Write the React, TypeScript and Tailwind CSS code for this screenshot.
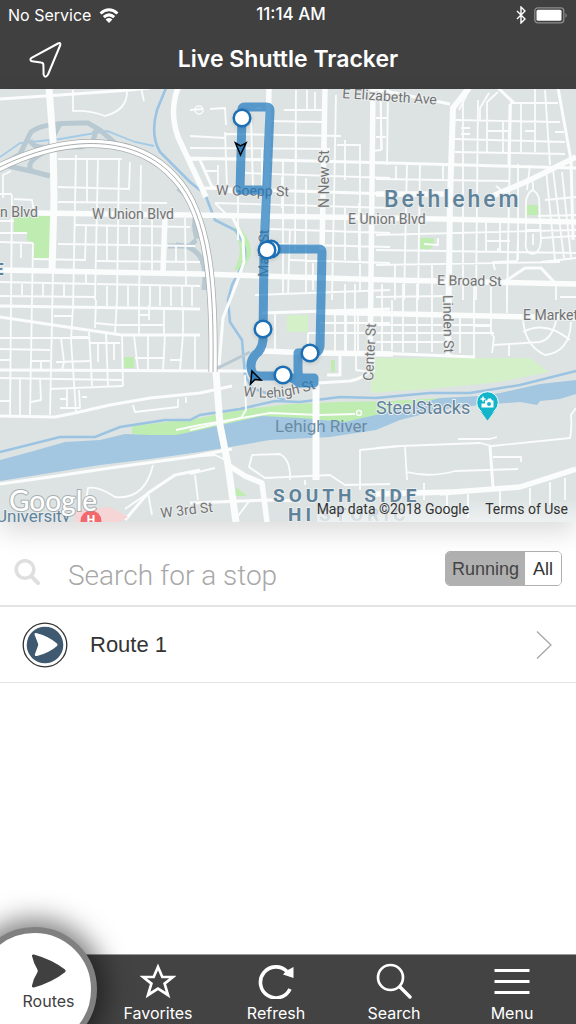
import React, { useState } from "react";

const minorRoads = [
  // north-west blocks
  "M58 159H122M58 187L130 189M58 202L167 203M75 225L190 227M0 242L33 243M58 244L195 246M0 221H14M0 233H27M34 259L85 260L86 226",
  "M76 155L73 307M87 160V202M98 160L95 300M119 160L117 300M130 162L129 189M141 165L139 300M12 195L10 415M33 243L30 415M21 244V258M107 226V260M152 220V245M152 246V270M129 227V245M185 218L186 285M176 246V262",
  "M3 198V175L11 171M0 194H12M14 199L32 200L34 212M73 90V111Q90 110 105 116Q128 110 127 90M141 88L144 101",
  "M0 282L95 284M0 296L95 297M97 284L200 286M95 261L200 262M22 284V295M43 284V296M64 284V296M86 272V285M107 286V306M128 286V306M150 286V306M160 286V306M171 286V306M182 286V306M192 286V306",
  // west side
  "M53 272L50 415M73 307L71 340L76 412M96 300L95 328M89 332L92 386M106 332L108 386M122 335L123 386M117 300L115 334M139 300V334M164 307V334M183 307V334M134 335L138 370M148 335V370M165 335L163 370M183 335L180 370M195 335V370",
  "M0 338H90M0 349L50 350M0 378L122 380M50 389L123 386M54 316H72M95 323L115 325L163 325M138 315H150M61 338L64 362L62 370M72 337H88M90 343H120M98 343V362M114 343V360M56 362L90 361M31 361H50M41 361V370M135 358H165M170 360H182M20 378V415M40 378L41 400L31 402M0 360H10M0 401H10M67 389V408M60 399H67M60 408H80L79 390M82 397H87M149 305V320",
  "M133 405L135 412L178 407V399M186 397V403",
  // centre blocks
  "M190 110L202 109M210 109L225 108L226 125M190 136L225 138L226 134L341 136M190 148L330 149M190 160L245 158M245 173L390 178M215 203L390 208M270 229L390 233M270 244L390 247M290 260L390 263M255 295L390 290M225 132L227 187M238 190V240M251 120L253 187M262 148V250M283 160V295M296 90L295 250M307 90V109M315 92V110M284 110L325 110M270 121L322 122M296 135V175M336 95L332 300M360 150V290M345 140V180M306 178V292M290 229L288 295M282 177V208M256 108H262M337 145H360V150M381 90V150L370 151M359 203V260M345 208V260M313 263V290",
  "M215 203L227 215L262 217M205 171H218V185M218 165V171",
  // north-east blocks
  "M388 88L387 165M376 118H387M407 165L404 300M420 165L418 300M396 166V180M443 166V180M376 137H386M380 88L382 150M376 179L510 181M463 100V300M478 100L476 300M511 100L507 300M455 120L560 122M455 139L565 142M455 152L565 154M461 128H470M461 134H470M487 120V152M503 120V152M487 131H510M521 103V152M535 88V152M545 90L550 165M555 132H564M511 103H558M525 131H535M489 93L480 108V120M470 88L459 110M498 92L487 102V120M376 235L576 230M376 250L576 253M376 265L560 262M486 220V252M500 220V252M486 241H510M498 248V252M530 165L527 190M546 170L555 260M553 170L564 258M562 172L571 258M545 200L576 197M538 216L576 215M541 262L576 258M541 238L576 236M496 186L505 193M518 164V260",
  "M526 240V200Q532 182 539 198L541 240Q540 254 532 254Q524 252 526 240M533 190V182M533 234V245M526 230H540M526 215V232M495 270L493 262L517 261L518 240M395 265V300M432 265V300M424 244L438 245V238",
  // east side
  "M382 284V352M403 284V352M417 284V352M376 325H492M376 333H494M376 342H450M376 297L448 296M474 284V356M491 284V333L494 337L492 353M507 284V313M556 285V300M576 297H560M474 326H491M460 315V353M432 300V352M494 345L540 342Q550 340 555 325M509 345V356M523 315Q523 345 545 355Q570 352 571 322M523 332Q545 320 570 340M555 325L558 313",
  "M335 310V352M346 310V352M358 310V352M320 323H390M320 333H390M308 333V350M275 313V350M308 333H318M374 355V372M356 355V370L370 372M355 284V352M345 284V352M392 300V350",
  // south side
  "M376 448L400 446L480 443L492 446L570 438Q572 430 571 415L576 408M405 447L407 480M407 472Q430 478 455 471L518 469M458 439H490L497 437M493 457H521V462M424 483V500M447 493V515M468 494V518M500 490V510M530 488V505M550 482V505M565 478V500",
  "M252 455L280 454Q291 460 290 480M252 455L249 467L265 478L330 475L345 485L390 484M360 490V450L400 446M195 475L198 500M215 468L190 474M305 480V485M190 457L215 455L230 462M245 375L246 410L241 418L190 430M235 520L250 500M153 465Q145 500 115 497Q98 486 88 488L86 500M148 493L152 515M125 509L148 493",
];

const midRoads = [
  "M0 99L60 95L130 90L150 88M0 306L200 309M0 317L60 326L122 335L200 335M0 370L235 371L250 371M0 416L55 417L75 413L110 405L150 398L200 393L232 386",
  "M0 484L50 477L110 468L190 457L232 449M200 470L175 475L148 493L125 520",
  "M190 158L390 163L576 168M200 188L390 194M262 313L390 309M200 160L212 187L232 192L265 194M232 216L243 238L244 262L236 285L223 318L219 365M190 503L270 500L300 501",
  "M376 353L475 357M558 88L571 160L573 240M490 446L493 487M318 383L350 381Q362 379 371 370M327 375H340V355M370 88L450 104",
  "M498 88L514 103M510 104L509 165M500 285L525 268H541L556 284",
];

const majorRoads = [
  "M0 270L200 274L390 280L576 284M35 213L190 215L390 218L576 222M165 218L163 272M178 88Q169 111 178 137L206 197",
  "M325 88L322 250M373 88L370 372M316 312L576 318M320 353L393 354M263 351L312 353M269 88L265 250",
  "M488 198L530 180L576 157M228 465L245 476L262 483L267 522M440 493L520 487L576 469",
  "M376 194H450M376 494L450 492",
];

type MapLabel = { x: number; y: number; text: string; rotate?: number };

const streets: MapLabel[] = [
  { x: 342, y: 98, text: "E Elizabeth Ave", rotate: 4 },
  { x: 216, y: 195, text: "W Goepp St", rotate: 1 },
  { x: 0, y: 217, text: "n Blvd" },
  { x: 92, y: 219, text: "W Union Blvd" },
  { x: 348, y: 224, text: "E Union Blvd" },
  { x: 437, y: 285, text: "E Broad St", rotate: 1 },
  { x: 523, y: 320, text: "E Market" },
  { x: 329, y: 208, text: "N New St", rotate: -90 },
  { x: 268, y: 277, text: "Main St", rotate: -89 },
  { x: 373, y: 381, text: "Center St", rotate: -87 },
  { x: 443, y: 295, text: "Linden St", rotate: 89 },
  { x: 161, y: 518, text: "W 3rd St", rotate: -7 },
];

const stops = [
  [242, 118],
  [271, 249],
  [267, 250],
  [263, 329],
  [310, 353],
  [283, 375],
];

function ShuttleMap() {
  return (
    <svg
      viewBox="0 89 576 433"
      preserveAspectRatio="xMidYMid slice"
      className="block h-[433px] w-full font-['Roboto',sans-serif]"
      role="img"
      aria-label="Shuttle map"
    >
      <rect y="89" width="576" height="433" fill="#dde3e3" />
      <g fill="#bfecb0">
        <path d="M14 216H50V258H34V243L27 240V232H14Z" />
        <rect x="124" y="357" width="10" height="11" />
        <rect x="527" y="205" width="11" height="10" />
        <path d="M420 238H434V244L430 249H420Z" />
        <path d="M237 226Q252 238 251 255L243 270H234Q246 248 233 230Z" />
        <path d="M132 426L175 421L200 418L240 410L290 404L340 402L390 401L440 398L400 420L320 428L200 440L132 434Z" />
        <path d="M236 487L247 496H235Z" />
        <rect x="331" y="360" width="4" height="12" />
      </g>
      <g fill="#d3f0c9">
        <rect x="287" y="315" width="21" height="17" />
        <path d="M371 358H530L549 372L500 382L430 389L371 393Z" />
      </g>
      <path
        d="M0 460L30 452L65 442L100 440L125 434L150 435L176 435L200 430L230 423L262 416L300 418L345 422L380 414L420 403L440 398L480 396L500 393L540 384L576 380V394L560 399L540 401L537 405L520 402L480 405L440 410L400 420L376 430L330 437L270 440L230 447L200 452L150 459L100 465L50 473L0 481Z"
        fill="#a3c7e0"
      />
      <path
        d="M0 452L60 437H95L120 427L165 420H190L200 415L240 409L275 401L300 402L340 397L376 398L430 393L470 393L520 385L576 371"
        fill="none"
        stroke="#9bc3e2"
        strokeWidth="2.5"
      />
      <path
        d="M166 88L157 110Q150 135 160 152L190 182L205 194L215 220L235 230Q250 248 243 264L232 285L228 300L230 322L242 340L245 375L252 388L285 400"
        fill="none"
        stroke="#9bc3e2"
        strokeWidth="2.6"
      />
      <path d="M0 157L20 143L60 139L107 131L135 142L154 146" fill="none" stroke="#a3cbe8" strokeWidth="1.8" />
      <g fill="none" stroke="#b9c9d1" strokeWidth="5">
        <path d="M0 167L20 154L31 132Q42 122 88 123L100 130L115 143L140 152" />
        <path d="M30 140Q33 149 50 147H80Q96 145 95 130M60 124Q55 132 50 145" />
        <path d="M8 166L35 172L50 176M32 172Q24 162 45 152" />
        <path d="M168 246H190L196 240M176 245Q210 246 204 290M197 239Q192 225 197 212M178 188Q200 205 205 240" />
        <path d="M216 369L250 352" strokeWidth="3" />
      </g>
      <g fill="none" stroke="#fbfcfc" strokeLinejoin="round">
        {minorRoads.map((d) => (
          <path key={d} d={d} strokeWidth="1.8" />
        ))}
        {midRoads.map((d) => (
          <path key={d} d={d} strokeWidth="3" />
        ))}
        {majorRoads.map((d) => (
          <path key={d} d={d} strokeWidth="5.5" />
        ))}
        <path d="M49 88L53 140L54 200L52 272" strokeWidth="7" />
        <path d="M469 88L453 108L450 200L448 356" strokeWidth="6" />
        <path d="M216 372L220 425L228 465L236 522M316 385V480" strokeWidth="7" />
        <path d="M176 430L200 425L230 420L270 413L320 415L355 414" strokeWidth="2" />
        <circle cx="359" cy="413" r="2.5" strokeWidth="1.5" />
        <circle cx="199" cy="110" r="4" strokeWidth="1.5" />
      </g>
      <g fill="none">
        <path d="M-2 168C70 132 138 136 175 178C210 215 214 290 213 372" stroke="#a9adae" strokeWidth="9" />
        <path d="M-2 168C70 132 138 136 175 178C210 215 214 290 213 372" stroke="#ffffff" strokeWidth="7.5" />
        <path d="M-2 168C70 132 138 136 175 178C210 215 214 290 213 372" stroke="#a9adae" strokeWidth="1" />
      </g>
      <path d="M75 510L110 507L128 517L118 523H75Z" fill="#f5d5d6" />

      <g fill="#737373" stroke="#e9eded" strokeWidth="2" paintOrder="stroke" fontSize="14">
        {streets.map((s) => (
          <text key={s.text} x={s.x} y={s.y} transform={`rotate(${s.rotate ?? 0} ${s.x} ${s.y})`}>
            {s.text}
          </text>
        ))}
        <path id="lehigh-st" d="M243 396Q285 402 322 386" fill="none" stroke="none" />
        <text>
          <textPath href="#lehigh-st">W Lehigh St</textPath>
        </text>
      </g>
      <text x="275" y="432" fontSize="17" fill="#6b8ba4">Lehigh River</text>
      <g fill="#5f829b" stroke="#e9eded" strokeWidth="2" paintOrder="stroke">
        <text x="384" y="207" fontSize="23" fontWeight="500" letterSpacing="3">Bethlehem</text>
        <text x="376" y="414" fontSize="18">SteelStacks</text>
        <text x="273" y="502" fontSize="19" fontWeight="700" letterSpacing="4">SOUTH SIDE</text>
        <text x="288" y="521" fontSize="19" fontWeight="700" letterSpacing="4">HI</text>
        <text x="319" y="521" fontSize="19" fontWeight="700" letterSpacing="4" opacity=".3">STORIC</text>
        <text x="-4" y="522" fontSize="17">University</text>
        <text x="-6" y="275" fontSize="17" fontWeight="700">E</text>
      </g>

      <path d="M479 409L487.500 420.500L496 409Z" fill="#12b5c9" />
      <circle cx="487.500" cy="402.500" r="10.800" fill="#12b5c9" stroke="#ffffff" strokeWidth="1" />
      <path d="M480 409L487.500 420L495 409Z" fill="#12b5c9" />
      <path d="M485 400.500h2l1-2h3l1 2h1.500v7h-12v-4h3.500Z" fill="#ffffff" />
      <circle cx="489" cy="404" r="2" fill="#12b5c9" />
      <path d="M483 396.500v5M480.500 399h5" stroke="#ffffff" strokeWidth="1.500" />
      <circle cx="91" cy="521" r="10.500" fill="#f2696d" />
      <text x="91" y="524" fontSize="12" fontWeight="700" textAnchor="middle" fill="#ffffff">H</text>

      <path
        d="M242 118V109Q242 107 245 107L267 107Q270 107 270 111L264 250L263 340Q262 350 255 355Q248 364 253 374Q256 376 261 376H283Q292 376 299 383H314V378H302Q298 377 298 370V353H313Q319 353 320 346L322 252Q322 249 319 249H268M242 118L240 190H265"
        fill="none"
        stroke="#1c77bd"
        strokeOpacity=".7"
        strokeWidth="9"
        strokeLinejoin="round"
      />
      <g fill="#2f80bd" stroke="#000000" strokeWidth="1.500" strokeLinejoin="miter">
        <path d="M235.500 143L240.500 146L246 143L240.500 155Z" />
        <path d="M252 371L261 380L255 379.500L250.500 384Z" />
      </g>
      <g fill="#ffffff" stroke="#1c6fb5" strokeWidth="2.500" className="drop-shadow-sm">
        {stops.map(([x, y]) => (
          <circle key={x} cx={x} cy={y} r="8.300" />
        ))}
      </g>
      <text
        x="9"
        y="511"
        fontSize="28"
        fontWeight="500"
        className="font-['Lato',sans-serif]"
        fill="#ffffff"
        stroke="#8f9899"
        strokeOpacity=".7"
        strokeWidth="2"
        paintOrder="stroke"
      >
        Google
      </text>
    </svg>
  );
}

function StatusBar() {
  return (
    <div className="grid h-[30px] grid-cols-3 items-center px-2 text-base">
      <div className="flex items-center gap-2">
        <span>No Service</span>
        <svg viewBox="0 0 20 15" className="h-[15px] w-5" aria-hidden="true">
          <g fill="none" stroke="white" strokeWidth="3">
            <path d="M1.500 5.500Q10-2 18.500 5.500" />
            <path d="M4.800 9.200Q10 4.600 15.200 9.200" />
          </g>
          <path d="M10 15L6.600 11.400Q10 8.600 13.400 11.400Z" fill="white" />
        </svg>
      </div>
      <span className="pl-1.5 text-center text-[17px] font-medium">11:14 AM</span>
      <div className="flex items-center justify-end gap-2">
        <svg viewBox="0 0 10 18" className="h-[18px] w-2.5" fill="none" stroke="white" strokeWidth="1.400" aria-hidden="true">
          <path d="M1 5L9 13L5 17V1L9 5L1 13" />
        </svg>
        <svg viewBox="0 0 34 17" className="h-[17px] w-[34px]" aria-hidden="true">
          <rect x=".8" y=".8" width="29" height="15" rx="3" fill="none" stroke="#8c8c8c" strokeWidth="1.300" />
          <rect x="2.500" y="2.800" width="25" height="11" rx="1.500" fill="white" />
          <path d="M31.500 6Q34 8.500 31.500 11Z" fill="#8c8c8c" />
        </svg>
      </div>
    </div>
  );
}

function Tab({ label, children }: { label: string; children: React.ReactNode }) {
  return (
    <button type="button" className="flex flex-1 flex-col items-center gap-1 pt-2">
      <svg viewBox="0 0 36 36" className="size-9" fill="none" stroke="white" strokeWidth="2.700" aria-hidden="true">
        {children}
      </svg>
      <span className="text-base leading-5">{label}</span>
    </button>
  );
}

export default function App() {
  const [filter, setFilter] = useState("Running");
  const [query, setQuery] = useState("");

  return (
    <div className="flex min-h-screen flex-col overflow-hidden bg-white font-['Inter',sans-serif]">
      <header className="bg-[#404040] text-white">
        <StatusBar />
        <div className="grid h-[59px] grid-cols-[80px_1fr_80px] items-center">
          <button type="button" aria-label="My location" className="pl-7">
            <svg viewBox="0 0 36 38" className="h-[38px] w-9" fill="none" stroke="white" strokeWidth="2" strokeLinejoin="round" aria-hidden="true">
              <path d="M30 2.500Q32.800 1 32.300 4L20 33.500Q17 38 15.600 33.500L15.400 24Q15.400 21.600 13 21.500L4 20.300Q1 19 3.500 16.800Z" />
            </svg>
          </button>
          <h1 className="text-center text-[23px] font-semibold">Live Shuttle Tracker</h1>
        </div>
      </header>

      <main className="flex-1">
        <section className="relative shadow-[0_10px_24px_rgba(0,0,0,0.14)]">
          <ShuttleMap />
          <div className="absolute right-0 bottom-0 flex h-6 items-center justify-end gap-4 bg-linear-to-b from-transparent to-white/50 pr-2 pb-0.5 font-['Roboto',sans-serif] text-sm text-[#333333]">
            <span>Map data ©2018 Google</span>
            <a href="#terms">Terms of Use</a>
          </div>
        </section>

        <form className="flex h-[85px] items-center border-b-2 border-[#e4e4e4] px-3.5 pt-6" onSubmit={(e) => e.preventDefault()}>
          <svg viewBox="0 0 26 26" className="-mt-2 mr-7 size-[26px]" fill="none" stroke="#dfdfdf" aria-hidden="true">
            <circle cx="11" cy="10.500" r="8.800" strokeWidth="3.600" />
            <path d="M17 17L24 24" strokeWidth="4" strokeLinecap="round" />
          </svg>
          <input
            type="text"
            aria-label="Search for a stop"
            placeholder="Search for a stop"
            value={query}
            onChange={(e) => setQuery(e.target.value)}
            className="min-w-0 flex-1 font-['Roboto',sans-serif] text-[28px] leading-9 font-light text-[#444444] outline-none placeholder:text-[#a8a8a8]"
          />
          <div className="-mt-3.5 flex h-[35px] overflow-hidden rounded-[5px] border border-[#b0b0b0] font-['Liberation_Sans',sans-serif] text-lg text-[#444444]">
            {["Running", "All"].map((name) => (
              <button
                key={name}
                type="button"
                aria-pressed={filter === name}
                onClick={() => setFilter(name)}
                className={filter === name ? "bg-[#b0b0b0] px-1.5" : "bg-white px-2 text-[#333333]"}
              >
                {name}
              </button>
            ))}
          </div>
        </form>

        <a href="#route-1" className="flex h-[76px] items-center border-b border-[#e4e4e4] pr-6 pl-[22px]">
          <svg viewBox="0 0 46 46" className="size-[46px]" aria-hidden="true">
            <circle cx="23" cy="23" r="21.800" fill="white" stroke="#333333" strokeWidth="1.300" />
            <circle cx="23" cy="23" r="18.300" fill="#3f5a70" />
            <path d="M12.500 12.500Q12.500 10.500 15 11.300Q27 14.500 35 21.500Q36.300 22.700 35 24Q27 31 15 34Q12.500 34.500 12.800 32.500L16 23.800Q16.300 22.700 16 21.600Z" fill="white" />
          </svg>
          <span className="ml-[22px] flex-1 font-['Liberation_Sans',sans-serif] text-[22px] text-[#333333]">Route 1</span>
          <svg viewBox="0 0 16 28" className="h-7 w-4" fill="none" stroke="#a8a8a8" strokeWidth="1.300" aria-hidden="true">
            <path d="M1 .5L15 14L1 27.500" />
          </svg>
        </a>
      </main>

      <nav className="relative flex h-[70px] border-t border-[#969999] bg-[#434343] pr-[5px] pl-[99px] text-white">
        <button
          type="button"
          aria-current="page"
          className="absolute -top-7 -left-7 flex size-[125px] flex-col items-center rounded-full border-6 border-[#808080] bg-white pt-5 pl-7 text-[#404040] shadow-[0_0_26px_8px_rgba(0,0,0,0.5)]"
        >
          <svg viewBox="0 0 36 36" className="size-9" aria-hidden="true">
            <path d="M1 3Q.5 1 3 1.500Q21 6.500 34 16.500Q35.500 18 34 19.300Q21 29.500 3 34.500Q.5 35 1 32.500Q2.500 25.500 6.300 19.500Q7.300 18 6.300 16.300Q2.500 10 1 3Z" fill="#404040" />
          </svg>
          <span className="mt-0.5 text-base leading-5">Routes</span>
        </button>
        <Tab label="Favorites">
          <path d="M18 4L22.300 14H33L24.600 20.600L28 32L18 25.500L8 32L11.400 20.600L3 14H13.700Z" />
        </Tab>
        <Tab label="Refresh">
          <path d="M32 26A15.500 15.500 0 1 1 29 8.500" strokeWidth="3.600" />
          <path d="M35.500 4V15L25 11.500L28 8Z" fill="white" stroke="none" />
        </Tab>
        <Tab label="Search">
          <circle cx="14.500" cy="14.500" r="12.500" />
          <path d="M24 24L34 34" strokeWidth="3.400" strokeLinecap="round" />
        </Tab>
        <Tab label="Menu">
          <path d="M.5 7.500H35.500M.5 18.500H35.500M.5 29.500H35.500" strokeWidth="3" />
        </Tab>
      </nav>
    </div>
  );
}
